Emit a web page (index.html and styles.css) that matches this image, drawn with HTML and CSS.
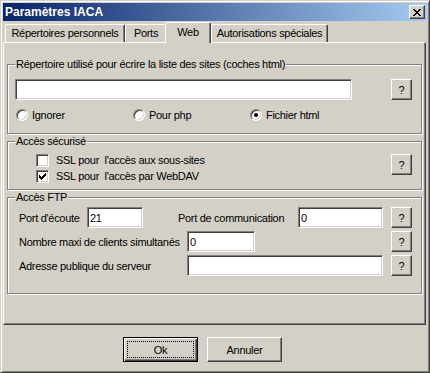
FILE: index.html
```html
<!DOCTYPE html>
<html lang="fr">
<head>
    <meta charset="UTF-8">
    <title>Paramètres IACA</title>
    <link rel="stylesheet" href="styles.css">
</head>
<body>
    <div class="window">
        <div class="titlebar">
            <span class="title">Paramètres IACA</span>
            <button class="close">
                <svg width="8" height="7" viewBox="0 0 8 7" shape-rendering="crispEdges"><path fill="#000" d="M0 0h2v1h-2z M6 0h2v1h-2z M1 1h2v1h-2z M5 1h2v1h-2z M2 2h4v1h-4z M3 3h2v1h-2z M2 4h4v1h-4z M1 5h2v1h-2z M5 5h2v1h-2z M0 6h2v1h-2z M6 6h2v1h-2z"/></svg>
            </button>
        </div>

        <div class="tabs">
            <div class="tab tab-perso">Répertoires personnels</div>
            <div class="tab tab-ports">Ports</div>
            <div class="tab tab-web active">Web</div>
            <div class="tab tab-auth">Autorisations spéciales</div>
        </div>

        <div class="panel">
            <fieldset class="group group-sites">
                <legend>Répertoire utilisé pour écrire la liste des sites (coches html)</legend>
                <div class="row">
                    <input class="field field-path" type="text" value="">
                    <button class="btn help">?</button>
                </div>
                <div class="radios">
                    <label class="radio"><span class="radio-mark"></span>Ignorer</label>
                    <label class="radio"><span class="radio-mark"></span>Pour php</label>
                    <label class="radio"><span class="radio-mark checked"></span>Fichier html</label>
                </div>
            </fieldset>

            <fieldset class="group group-ssl">
                <legend>Accès sécurisé</legend>
                <div class="ssl-body">
                    <div class="checks">
                        <label class="checkbox"><span class="check"></span>SSL pour&nbsp; l'accès aux sous-sites</label>
                        <label class="checkbox"><span class="check"><svg width="7" height="7" viewBox="0 0 7 7" shape-rendering="crispEdges"><path fill="#000" d="M6 0h1v1h-1z M5 1h2v1h-2z M0 2h1v1h-1z M4 2h3v1h-3z M0 3h2v1h-2z M3 3h3v1h-3z M0 4h5v1h-5z M1 5h3v1h-3z M2 6h1v1h-1z"/></svg></span>SSL pour&nbsp; l'accès par WebDAV</label>
                    </div>
                    <button class="btn help help-ssl">?</button>
                </div>
            </fieldset>

            <fieldset class="group group-ftp">
                <legend>Accès FTP</legend>
                <div class="row">
                    <span class="label label-port">Port d'écoute</span>
                    <input class="field field-port" type="text" value="21">
                    <span class="label label-comm">Port de communication</span>
                    <input class="field field-comm" type="text" value="0">
                    <button class="btn help">?</button>
                </div>
                <div class="row">
                    <span class="label label-long">Nombre maxi de clients simultanés</span>
                    <input class="field field-clients" type="text" value="0">
                    <button class="btn help">?</button>
                </div>
                <div class="row">
                    <span class="label label-long">Adresse publique du serveur</span>
                    <input class="field field-address" type="text" value="">
                    <button class="btn help">?</button>
                </div>
            </fieldset>
        </div>

        <div class="actions">
            <button class="btn action default">Ok</button>
            <button class="btn action">Annuler</button>
        </div>
    </div>
</body>
</html>
```

FILE: styles.css
```css
body {
    margin: 0;
    font-family: "Liberation Sans", Arial, sans-serif;
    font-size: 11px;
    letter-spacing: -0.3px;
    color: #000;
    background: #d4d0c8;
}
.window {
    width: 430px;
    height: 373px;
    box-sizing: border-box;
    padding: 2px;
    border: 1px solid;
    border-color: #d4d0c8 #404040 #404040 #d4d0c8;
    box-shadow: inset 1px 1px #fff, inset -1px -1px #808080;
    background: #d4d0c8;
}
.titlebar {
    height: 18px;
    display: flex;
    align-items: center;
    justify-content: space-between;
    padding: 0 2px;
    background: linear-gradient(to right, #0a246a, #a6caf0);
}
.title {
    color: #fff;
    font-weight: bold;
    font-size: 12px;
    letter-spacing: 0;
}
button {
    font: inherit;
    letter-spacing: inherit;
    color: #000;
    margin: 0;
    padding: 0;
    background: #d4d0c8;
    box-sizing: border-box;
}
.close {
    width: 16px;
    height: 14px;
    display: flex;
    align-items: center;
    justify-content: center;
    border: 1px solid;
    border-color: #fff #404040 #404040 #fff;
    box-shadow: inset -1px -1px #808080;
}
.btn {
    border: 1px solid;
    border-color: #fff #404040 #404040 #fff;
    box-shadow: inset -1px -1px #808080;
}

/* onglets */
.tabs {
    display: flex;
    align-items: flex-end;
    height: 20px;
    margin-top: 1px;
    padding-left: 2px;
}
.tab {
    height: 18px;
    box-sizing: border-box;
    line-height: 16px;
    text-align: center;
    white-space: nowrap;
    border-top: 1px solid #fff;
    border-left: 1px solid #fff;
    border-right: 1px solid #404040;
    border-radius: 2px 2px 0 0;
    box-shadow: inset -1px 0 #808080;
}
.tab.active {
    height: 21px;
    line-height: 18px;
    margin-left: -2px;
    margin-bottom: -1px;
    position: relative;
    z-index: 1;
    background: #d4d0c8;
}
.tab-perso { width: 120px; }
.tab-ports { width: 42px; }
.tab-web { width: 46px; }
.tab-auth { width: 117px; }

.panel {
    height: 283px;
    width: 423px;
    box-sizing: border-box;
    padding-top: 15px;
    border: 1px solid;
    border-color: #fff #404040 #404040 #fff;
    box-shadow: inset -1px -1px #808080;
}

/* cadres */
.group {
    margin: 0 3px;
    border: 1px solid #808080;
    box-shadow: inset 1px 1px #fff, 1px 1px #fff;
    min-width: 0;
}
.group + .group {
    margin-top: 1px;
}
legend {
    padding: 0 1px;
    line-height: 13px;
    background: #d4d0c8;
}
.group-sites { padding: 8px 9px 12px 7px; }
.group-ssl { padding: 4px 9px 5px 7px; }
.group-ftp { padding: 3px 9px 17px 7px; }

.row {
    display: flex;
    align-items: center;
    height: 21px;
}
.group-ftp .row + .row {
    margin-top: 3px;
}
.help {
    width: 21px;
    height: 21px;
    margin-left: auto;
}
.field {
    height: 21px;
    box-sizing: border-box;
    margin: 0;
    padding: 0 2px;
    font: inherit;
    letter-spacing: inherit;
    color: #000;
    background: #fff;
    outline: none;
    border: 1px solid;
    border-color: #808080 #fff #fff #808080;
    box-shadow: inset 1px 1px #404040, inset -1px -1px #d4d0c8;
}
.field-path { width: 337px; }
.field-port { width: 56px; }
.field-comm { width: 85px; }
.field-clients { width: 68px; }
.field-address { width: 196px; }

/* boutons radio */
.radios {
    display: flex;
    height: 13px;
    margin-top: 8px;
}
.radio {
    width: 117px;
    display: flex;
    align-items: center;
    gap: 4px;
}
.radio-mark {
    width: 12px;
    height: 12px;
    margin-left: 1px;
    box-sizing: border-box;
    border-radius: 50%;
    border: 1px solid;
    border-color: #808080 #fff #fff #808080;
    box-shadow: inset 1px 1px #404040, inset -1px -1px #d4d0c8;
    background: #fff;
    position: relative;
}
.radio-mark.checked::after {
    content: "";
    position: absolute;
    left: 3px;
    top: 3px;
    width: 4px;
    height: 4px;
    border-radius: 50%;
    background: #000;
}

/* cases à cocher */
.ssl-body {
    display: flex;
    align-items: flex-start;
}
.checks {
    margin-left: 21px;
}
.checkbox {
    height: 16px;
    display: flex;
    align-items: center;
    gap: 7px;
}
.check {
    width: 13px;
    height: 13px;
    box-sizing: border-box;
    display: flex;
    align-items: center;
    justify-content: center;
    border: 1px solid;
    border-color: #808080 #fff #fff #808080;
    box-shadow: inset 1px 1px #404040, inset -1px -1px #d4d0c8;
    background: #fff;
}
.help-ssl {
    margin-top: 2px;
}

/* FTP */
.label {
    white-space: nowrap;
}
.label-port {
    width: 68px;
    margin-left: 4px;
}
.label-comm {
    width: 120px;
    margin-left: 35px;
}
.label-long {
    width: 168px;
    margin-left: 4px;
}

/* boutons du bas */
.actions {
    display: flex;
    gap: 9px;
    margin-top: 12px;
    padding-left: 120px;
}
.action {
    width: 75px;
    height: 25px;
}
.action.default {
    border: 1px solid #000;
    box-shadow: inset 1px 1px #fff, inset -1px -1px #404040, inset -2px -2px #808080;
    outline: 1px dotted #000;
    outline-offset: -5px;
}
```
